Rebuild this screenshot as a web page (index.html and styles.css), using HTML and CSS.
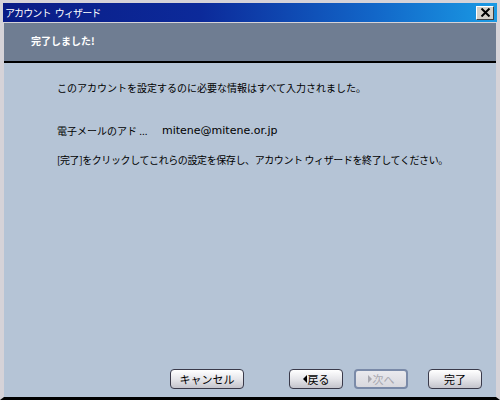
FILE: index.html
```html
<!DOCTYPE html>
<html lang="ja">
<head>
<meta charset="utf-8">
<link rel="stylesheet" href="styles.css">
</head>
<body>
<div class="window">
  <div class="titlebar">
    <span class="title">アカウント ウィザード</span>
    <span class="close"><svg width="11" height="9" viewBox="0 0 11 9"><path d="M1.5 0.5 L9.5 8.5 M9.5 0.5 L1.5 8.5" stroke="#000" stroke-width="2" fill="none"/></svg></span>
  </div>
  <div class="header">完了しました!</div>
  <div class="content">
    <p class="line l1">このアカウントを設定するのに必要な情報はすべて入力されました。</p>
    <p class="line l2"><span class="label">電子メールのアド ...</span><span class="value">mitene@mitene.or.jp</span></p>
    <p class="line l3">[完了]をクリックしてこれらの設定を保存し、アカウント ウィザードを終了してください。</p>
    <div class="buttons">
      <button class="btn cancel">キャンセル</button>
      <button class="btn back"><span class="arrow left"></span>戻る</button>
      <button class="btn next" disabled><span class="arrow right"></span>次へ</button>
      <button class="btn finish">完了</button>
    </div>
  </div>
</div>
</body>
</html>
```
FILE: styles.css
```css
* { box-sizing: border-box; }
html, body { margin: 0; padding: 0; }
body {
  width: 500px;
  height: 400px;
  overflow: hidden;
  font-family: "Noto Sans CJK JP", "Noto Sans", sans-serif;
  font-size: 10px;
}
.window {
  width: 500px;
  height: 400px;
  background: #d6d3d8;
  display: flex;
  flex-direction: column;
  padding: 3px 4px 0 4px;
}
.titlebar {
  height: 19px;
  margin: 0 -1px;
  background: linear-gradient(to right, #0a1c86 0%, #0c2a9a 40%, #1266c8 75%, #1a9ae4 100%);
  display: flex;
  align-items: center;
  justify-content: space-between;
  padding: 0 3px 0 2px;
}
.title {
  color: #fff;
  font-size: 10px;
  letter-spacing: -0.9px;
  word-spacing: 3px;
  line-height: 14px;
}
.close {
  width: 18px;
  height: 14px;
  background: #d4d0c8;
  border: 1px solid;
  border-color: #fff #404040 #404040 #fff;
  display: flex;
  align-items: center;
  justify-content: center;
}
.header {
  margin-top: 1px;
  height: 40px;
  background: #6f7d92;
  border-bottom: 2px solid #000;
  color: #fff;
  font-weight: bold;
  font-size: 10px;
  padding: 11px 0 0 27px;
  line-height: 14px;
}
.content {
  flex: 1;
  background: #b5c4d6;
  display: flex;
  flex-direction: column;
  padding: 0 0 8px 53px;
  border-bottom: 3px solid #000;
  margin: 0 -4px;
  border-left: 4px solid #d6d3d8;
  border-right: 4px solid #d6d3d8;
}
.line {
  margin: 0;
  font-size: 10px;
  line-height: 16px;
  color: #000;
  white-space: nowrap;
}
.l1 { margin-top: 17px; }
.l2 { margin-top: 27px; display: flex; }
.l2 .label { width: 105px; }
.l2 .value { font-family: "DejaVu Sans", sans-serif; font-size: 11px; }
.l3 { margin-top: 13px; letter-spacing: -0.4px; }
.buttons {
  margin-top: auto;
  display: flex;
  padding-left: 113px;
}
.btn {
  font-family: inherit;
  font-size: 11px;
  height: 20px;
  width: 54px;
  padding: 0;
  border: 1px solid #3a3a4a;
  border-radius: 4px;
  background: linear-gradient(to bottom, #ffffff 0%, #e6e6ea 50%, #c4c4cc 100%);
  color: #000;
  display: flex;
  align-items: center;
  justify-content: center;
  line-height: 14px;
}
.cancel { width: 74px; }
.back { margin-left: 45px; }
.next {
  margin-left: 11px;
  color: #a8a8b0;
  border: 2px solid #7a8aa8;
  background: linear-gradient(to bottom, #eaeaee 0%, #d8d8de 100%);
}
.finish { margin-left: 20px; }
.arrow {
  width: 0;
  height: 0;
  border-top: 4px solid transparent;
  border-bottom: 4px solid transparent;
  margin-right: 1px;
}
.arrow.left { border-right: 4px solid #000; }
.arrow.right { border-left: 4px solid #a8a8b0; }
```
